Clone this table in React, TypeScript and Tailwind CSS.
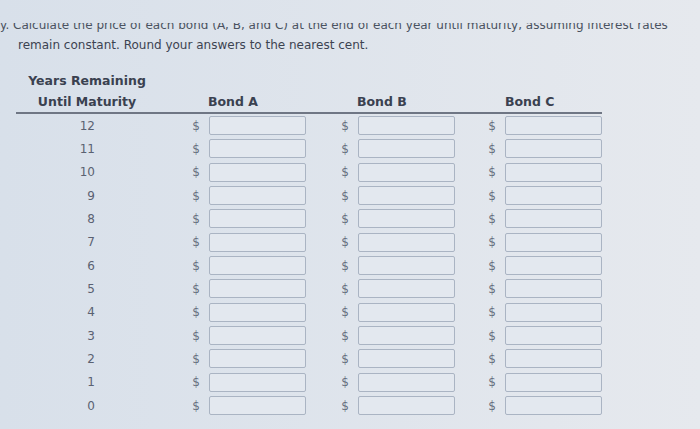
import React from 'react';

const years = [12, 11, 10, 9, 8, 7, 6, 5, 4, 3, 2, 1, 0];

const BondInput: React.FC<{ width: string }> = ({ width }) => (
  <div className={`flex items-center justify-end gap-[9px] ${width}`}>
    <span className="text-[12px] text-[#687080]">$</span>
    <div className="h-[19px] w-[97px] rounded-[2px] border border-[#aab4c3] bg-[#e3e8ef]" />
  </div>
);

const App: React.FC = () => {
  return (
    <div
      className="h-[429px] w-[700px] overflow-hidden bg-linear-to-r from-[#d8e0ea] to-[#e6e9ee] text-[#3c4351]"
      style={{ fontFamily: '"DejaVu Sans", Verdana, sans-serif' }}
    >
      {/* question text, first line half hidden under the top edge */}
      <div className="pl-[18px] text-[12px] leading-[20px]">
        <div className="-ml-[18px] mt-[23px] h-[10px] overflow-hidden">
          <p className="-mt-[8px] whitespace-nowrap text-[#4a5260]">
            y. Calculate the price of each bond (A, B, and C) at the end of each year until maturity, assuming interest rates
          </p>
        </div>
        <p className="mt-[2px]">remain constant. Round your answers to the nearest cent.</p>
      </div>

      <div className="ml-[16px] mt-[15px] w-[586px]">
        {/* header */}
        <div className="flex items-end border-b-2 border-[#6f7684] text-[12.5px] font-bold leading-[21px] text-[#3a4150]">
          <div className="w-[142px] text-center">
            <div>Years Remaining</div>
            <div>Until Maturity</div>
          </div>
          <div className="w-[49px]" />
          <div className="w-[150px] pl-[1px]">Bond A</div>
          <div className="w-[148px]">Bond B</div>
          <div>Bond C</div>
        </div>

        {/* rows */}
        {years.map((y) => (
          <div key={y} className="flex h-[23.33px] items-center">
            <div className="w-[79px] text-right text-[12px] text-[#5a6172]">{y}</div>
            <BondInput width="w-[211px]" />
            <BondInput width="w-[149px]" />
            <BondInput width="w-[147px]" />
          </div>
        ))}
      </div>
    </div>
  );
};

export default App;
